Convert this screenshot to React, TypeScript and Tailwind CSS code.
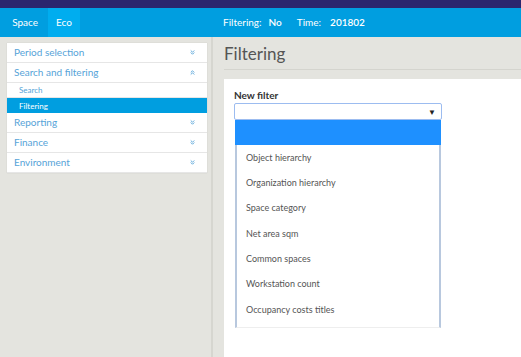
import { ChevronsDown, ChevronsUp } from "lucide-react";

const MENU = [
  { label: "Period selection", open: false },
  { label: "Search and filtering", open: true, children: ["Search", "Filtering"] },
  { label: "Reporting", open: false },
  { label: "Finance", open: false },
  { label: "Environment", open: false },
];

const OPTIONS = [
  "Object hierarchy",
  "Organization hierarchy",
  "Space category",
  "Net area sqm",
  "Common spaces",
  "Workstation count",
  "Occupancy costs titles",
];

export default function App() {
  return (
    <div className="w-[521px] h-[357px] overflow-hidden bg-[#e4e4df] flex flex-col font-['Lato',sans-serif]">
      <div className="h-[8px] bg-[#2b266e]" />
      <div className="h-[29px] bg-[#009ee0] flex items-stretch text-white text-[10px]">
        <div className="w-[48px] flex items-center justify-end pr-[10px]">Space</div>
        <div className="w-[32px] bg-[#00adef] flex items-center justify-center">Eco</div>
        <div className="flex items-center ml-[143px]">
          <span>Filtering:</span>
          <span className="ml-[7px] font-semibold">No</span>
          <span className="ml-[15px]">Time:</span>
          <span className="ml-[9px] font-semibold">201802</span>
        </div>
      </div>

      <div className="flex flex-1 min-h-0">
        <div className="w-[213px] pt-[6px] pl-[7px] border-r-2 border-[#d6d6d0]">
          <div className="w-[200px] bg-white shadow-[0_0_1px_rgba(0,0,0,0.15)]">
            {MENU.map((m) => (
              <div key={m.label}>
                <div className="h-[20px] flex items-center justify-between px-[7px] border-b border-[#e6e6e6] text-[10px] text-[#56a3d8]">
                  <span>{m.label}</span>
                  {m.open ? (
                    <ChevronsUp size={7} strokeWidth={3} className="text-[#4b9ed6] mr-[4px]" />
                  ) : (
                    <ChevronsDown size={7} strokeWidth={3} className="text-[#4b9ed6] mr-[4px]" />
                  )}
                </div>
                {m.children?.map((c) => (
                  <div
                    key={c}
                    className={
                      c === "Filtering"
                        ? "h-[15px] flex items-center pl-[12px] text-[8px] text-white bg-[#009ee0]"
                        : "h-[15px] flex items-center pl-[12px] text-[8px] text-[#56a3d8] border-b border-[#e6e6e6]"
                    }
                  >
                    {c}
                  </div>
                ))}
              </div>
            ))}
          </div>
        </div>

        <div className="flex-1 flex flex-col pl-[11px]">
          <div className="h-[33px] flex items-center pt-[2px] text-[17px] text-[#555] border-b border-[#d4d4ce]">
            Filtering
          </div>
          <div className="mt-[9px] flex-1 bg-white pl-[10px] pt-[8px]">
            <div className="text-[10px] font-bold text-[#333] h-[16px] flex items-center">New filter</div>
            <div className="w-[208px] h-[17px] border border-[#9cbcf0] rounded-[2px] flex items-center justify-end pr-[5px] text-[8px] text-[#222]">
              ▼
            </div>
            <div className="ml-[1px] w-[206px] border-x-2 border-[#b8c8de] border-b border-b-[#eee]">
              <div className="h-[25px] bg-[#1e90ff] -mx-[2px]" />
              {OPTIONS.map((o) => (
                <div key={o} className="h-[25.3px] flex items-center pl-[9px] text-[9px] text-[#555]">
                  {o}
                </div>
              ))}
              <div className="h-[5px]" />
            </div>
          </div>
        </div>
      </div>
    </div>
  );
}
